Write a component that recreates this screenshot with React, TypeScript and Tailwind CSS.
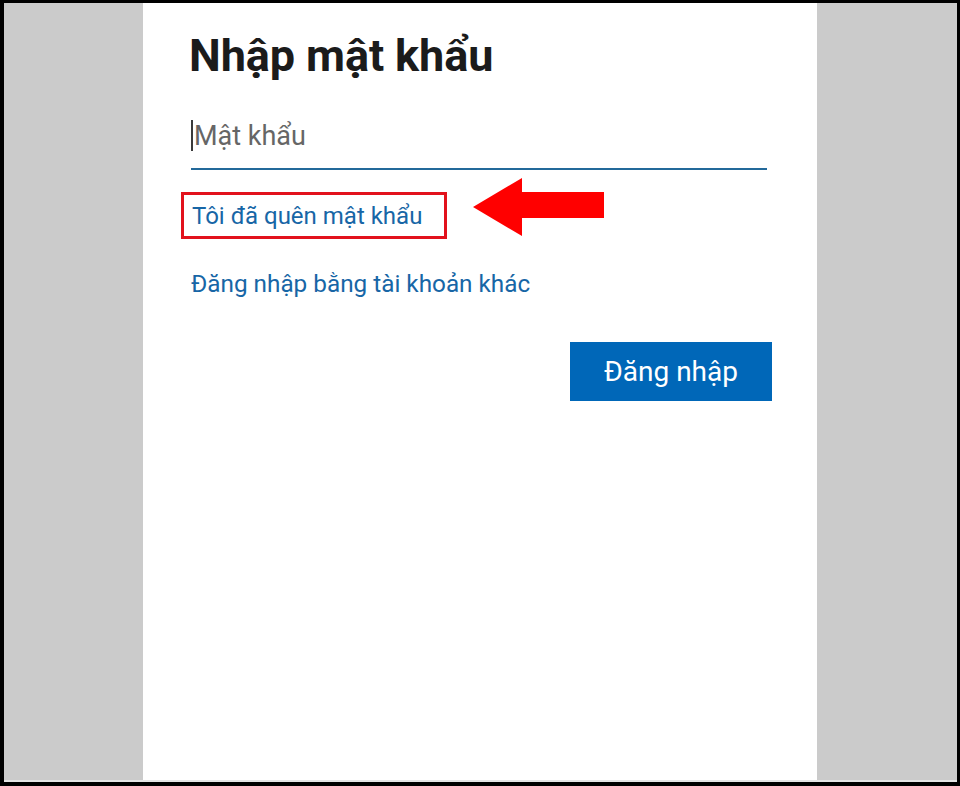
import React from "react";

const font = { fontFamily: "Roboto, 'Noto Sans', sans-serif" };

const RedArrow = () => (
  <svg width="134" height="60" viewBox="0 0 134 60" className="absolute left-[473px] top-[177px]">
    <polygon points="0,30 49,1 49,15 131,15 131,41 49,41 49,59" fill="#ff0000" />
  </svg>
);

export default function App() {
  return (
    <div className="relative w-[960px] h-[786px] bg-black pt-[3px] pl-[4px] pr-[3px] pb-[4px]" style={font}>
      <div className="flex h-full border-b-2 border-[#e4e4e4]">
        <div className="w-[139px] bg-[#cbcbcb]" />
        <div className="w-[674px] bg-white pl-[48px] pr-[45px]">
          <h1 className="mt-[27px] -ml-[2px] text-[45px] leading-[52px] font-bold text-[#1b1b1b] tracking-[-0.1px]">
            Nhập mật khẩu
          </h1>
          <div className="mt-[28px] mr-[5px] h-[60px] border-b-2 border-[#23699a] flex items-start">
            <span className="w-[2px] h-[31px] mt-[10px] bg-[#3a3a3a]" />
            <span className="ml-[1px] mt-[6px] text-[27px] leading-[40px] text-[#666666]">Mật khẩu</span>
          </div>
          <div className="mt-[22px] -ml-[10px] w-[266px] h-[47px] border-[3px] border-[#e2121c] flex items-center pl-[8px]">
            <span className="text-[24px] leading-[30px] text-[#1766a6]">Tôi đã quên mật khẩu</span>
          </div>
          <div className="mt-[30px] text-[24.3px] leading-[30px] text-[#1766a6]">
            Đăng nhập bằng tài khoản khác
          </div>
          <div className="mt-[43px] flex justify-end">
            <button className="w-[202px] h-[59px] bg-[#0067b8] text-white text-[28px] leading-none">
              Đăng nhập
            </button>
          </div>
        </div>
        <div className="flex-1 bg-[#cbcbcb]" />
      </div>
      <RedArrow />
    </div>
  );
}
